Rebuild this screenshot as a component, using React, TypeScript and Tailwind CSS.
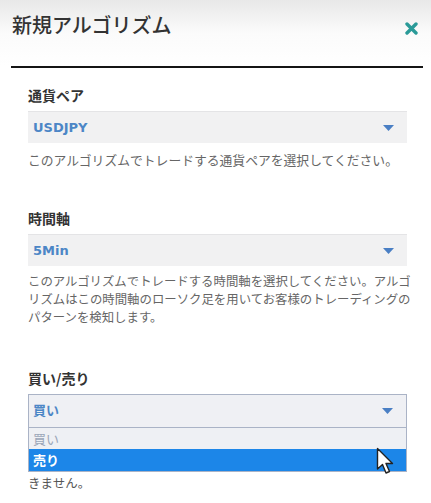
import React from 'react'

const jp = { fontFamily: '"Noto Sans CJK JP", "Noto Sans", sans-serif' }
const latin = { fontFamily: '"DejaVu Sans", "Noto Sans CJK JP", sans-serif' }

function Caret() {
  return (
    <svg width="11" height="6" viewBox="0 0 11 6" className="shrink-0">
      <path d="M0 0 L11 0 L5.5 6 Z" fill="#4a7fc4" />
    </svg>
  )
}

function SelectBox({ value, open, h = 'h-[32px]' }: { value: string; open?: boolean; h?: string }) {
  return (
    <div
      className={
        open
          ? `flex ${h} items-center justify-between border border-[#aab3c6] bg-[#eff0f4] pl-[4px] pr-[13px]`
          : `flex ${h} items-center justify-between border-t border-[#e4e4e6] bg-[#f1f1f2] pl-[5px] pr-[13px]`
      }
    >
      <span className="text-[13px] font-bold text-[#4c86c6]" style={latin}>
        {value}
      </span>
      <Caret />
    </div>
  )
}

export default function App() {
  return (
    <div className="relative h-[503px] w-[431px] overflow-hidden bg-white" style={jp}>
      {/* header */}
      <div className="bg-gradient-to-b from-[#e8e8e8] via-[#fbfbfb] to-white pl-[12px] pr-[13px] pt-[11px]">
        <div className="flex h-[55px] items-start justify-between">
          <h1 className="text-[20px] font-medium leading-[28px] text-[#333]">新規アルゴリズム</h1>
          <svg width="13" height="13" viewBox="0 0 13 13" className="mt-[11px]">
            <path d="M2 2 L11 11 M11 2 L2 11" stroke="#2a9a98" strokeWidth="3.4" strokeLinecap="round" />
          </svg>
        </div>
      </div>
      <div className="ml-[11px] mr-[8px] h-[2px] bg-[#151515]" />

      {/* form */}
      <div className="flex flex-col pl-[28px] pr-[24px] pt-[17px]">
        {/* 通貨ペア */}
        <div className="text-[14px] font-bold leading-[20px] text-[#333]">通貨ペア</div>
        <div className="mt-[6px]">
          <SelectBox value="USDJPY" />
        </div>
        <div className="mt-[8px] whitespace-nowrap text-[12.8px] leading-[18px] text-[#666]">
          このアルゴリズムでトレードする通貨ペアを選択してください。
        </div>

        {/* 時間軸 */}
        <div className="mt-[39px] text-[14px] font-bold leading-[20px] text-[#333]">時間軸</div>
        <div className="mt-[6px]">
          <SelectBox value="5Min" />
        </div>
        <div className="-mr-[20px] mt-[6px] whitespace-nowrap text-[12.4px] leading-[18px] text-[#666]">
          <div>このアルゴリズムでトレードする時間軸を選択してください。アルゴ</div>
          <div>リズムはこの時間軸のローソク足を用いてお客様のトレーディングの</div>
          <div>パターンを検知します。</div>
        </div>

        {/* 買い/売り */}
        <div className="relative mt-[42px] flex flex-col">
          <div className="text-[14px] font-bold leading-[20px] text-[#333]">買い/売り</div>
          <div className="mt-[6px]">
            <SelectBox value="買い" open h="h-[34px]" />
          </div>
          <div className="mt-[46px] text-[12.5px] leading-[18px] text-[#555]">きません。</div>
          {/* open dropdown list */}
          <div className="absolute left-0 right-0 top-[60px] border border-t-0 border-[#aab3c6]">
            <div className="h-[21px] bg-[#eef0f4] pl-[4px] text-[13px] leading-[21px] text-[#9aa6b8]">買い</div>
            <div className="h-[22px] bg-[#1c86e8] pl-[4px] text-[13px] font-bold leading-[22px] text-white">売り</div>
          </div>
        </div>
      </div>

      {/* mouse cursor */}
      <svg width="20" height="30" viewBox="0 0 20 30" className="absolute left-[376px] top-[447px]">
        <path
          d="M1.5 1.5 L1.5 22 L6.5 17.5 L10 26 L13.5 24.5 L10 16.5 L16.5 16.5 Z"
          fill="white"
          stroke="#222"
          strokeWidth="1.4"
          strokeLinejoin="round"
        />
      </svg>
    </div>
  )
}
